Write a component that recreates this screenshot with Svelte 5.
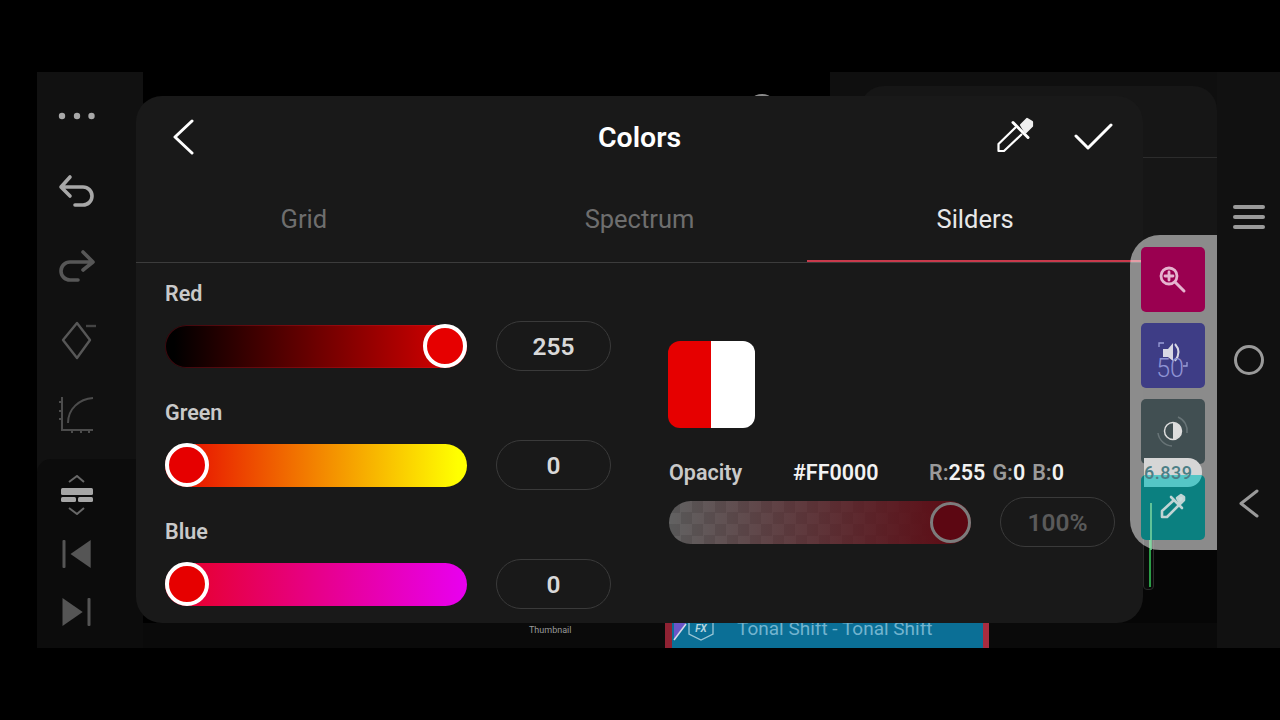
<script lang="ts">
  const tabs = ['Grid', 'Spectrum', 'Silders'];
  let activeTab = 'Silders';

  const channels = [
    { name: 'Red', value: 255, kind: 'red', end: true },
    { name: 'Green', value: 0, kind: 'green', end: false },
    { name: 'Blue', value: 0, kind: 'blue', end: false }
  ];
</script>

<div class="screen">
  <aside class="rail">
    <div class="rail-top">
      <div class="rail-btn">
        <svg viewBox="0 0 40 40" fill="#a8a8a8"><circle cx="5" cy="20" r="3.2" /><circle cx="20" cy="20" r="3.2" /><circle cx="34.500" cy="20" r="3.2" /></svg>
      </div>
      <div class="rail-btn">
        <svg viewBox="0 0 40 40" fill="none" stroke="#a8a8a8" stroke-width="3.600" stroke-linecap="round" stroke-linejoin="round"><path d="M13 6 L4 16 L13 25 M5 16 H26 A9 9 0 0 1 26 34 H18" /></svg>
      </div>
      <div class="rail-btn">
        <svg viewBox="0 0 40 40" fill="none" stroke="#575757" stroke-width="3.600" stroke-linecap="round" stroke-linejoin="round"><path d="M26 7 L36 17 L26 25 M35 17 H13 A9 9 0 0 0 13 35 H21" /></svg>
      </div>
      <div class="rail-btn">
        <svg viewBox="0 0 40 40" fill="none" stroke="#575757" stroke-width="2.4" stroke-linejoin="round"><path d="M20 3 L33 20 L20 38 L6 20 Z" /><path d="M29 6 H39" stroke="#444" /></svg>
      </div>
      <div class="rail-btn">
        <svg viewBox="0 0 40 40" fill="none" stroke="#4c4c4c" stroke-width="2"><path d="M5 3 V36 H36 M2 8 H5 M2 17 H5 M2 25 H5 M15 36 V39 M24 36 V39 M32 36 V39" /><path d="M11 29 C11 15 22 5 36 4" /></svg>
      </div>
    </div>
    <div class="rail-bottom">
      <div class="rail-btn small">
        <svg viewBox="0 0 40 40" fill="#a6a6a6"><path d="M12 7 L20 1 L27 7 M12 33 L20 39 L27 33" fill="none" stroke="#686868" stroke-width="2" /><rect x="4" y="13" width="32" height="7" rx="1.500" /><rect x="4" y="22" width="15" height="5" rx="1.500" /><rect x="21" y="22" width="15" height="5" rx="1.500" /></svg>
      </div>
      <div class="rail-btn small">
        <svg viewBox="0 0 40 40" fill="#555"><rect x="5.500" y="6" width="3" height="28" rx="1" /><path d="M13.500 20 L33.700 6 V34 Z" /></svg>
      </div>
      <div class="rail-btn small">
        <svg viewBox="0 0 40 40" fill="#555"><rect x="30.500" y="6" width="3" height="28" rx="1" /><path d="M25.700 20 L5.500 6 V34 Z" /></svg>
      </div>
    </div>
  </aside>

  <main class="stage">
    <div class="stage-top">
      <div class="preview"><div class="peek"></div></div>
      <div class="panel">
        <div class="panel-card"><div class="panel-head"></div></div>
        <div class="panel-rest"></div>
      </div>
    </div>
    <div class="strip">
      <span class="thumb-label">Thumbnail</span>
      <div class="clip">
        <svg class="clip-badge" viewBox="0 0 42 20" fill="none">
          <path d="M2 0 H14 L2 17 Z" fill="#6a55c8" />
          <path d="M14 1 L2 17" stroke="#d8d8e8" stroke-width="1.600" />
          <path d="M17 -4 V11 L29 17 L41 11 V-4" stroke="#9cc6d6" stroke-width="1.300" />
          <text x="29" y="9" text-anchor="middle" class="fx">FX</text>
        </svg>
        <span class="clip-title">Tonal Shift - Tonal Shift</span>
      </div>
    </div>
  </main>

  <nav class="sysbar">
    <div class="hamburger"><span></span><span></span><span></span></div>
    <div class="home"></div>
    <svg class="sys-back" viewBox="0 0 24 32" fill="none" stroke="#9a9a9a" stroke-width="3" stroke-linecap="round" stroke-linejoin="round"><path d="M20 3 L4 15.500 L20 28" /></svg>
  </nav>

  <div class="track-peek"><i></i></div>

  <section class="modal">
    <header class="modal-head">
      <svg class="icon back" viewBox="0 0 24 36" fill="none" stroke="#fff" stroke-width="3" stroke-linecap="round" stroke-linejoin="round"><path d="M20 2 L3 18 L20 34" /></svg>
      <h1>Colors</h1>
      <div class="head-actions">
        <svg class="icon dropper" viewBox="0 0 40 40" fill="none" stroke="#fff" stroke-width="2.200" stroke-linejoin="round"><path d="M20 10 L2.500 27 V34 H8 L26 17" /><path d="M17 5.500 L32 20.500" stroke-width="3" stroke-linecap="round" /><path d="M25 8 L31 2 L36 5 V9 L29.500 15.500 Z" fill="#eee" stroke="#eee" /></svg>
        <svg class="icon check" viewBox="0 0 40 30" fill="none" stroke="#fff" stroke-width="3" stroke-linecap="round" stroke-linejoin="round"><path d="M3 14 L15 26 L38 3" /></svg>
      </div>
    </header>

    <div class="tabs">
      {#each tabs as tab}
        <div class="tab" class:active={tab === activeTab}>{tab}</div>
      {/each}
    </div>

    <div class="body">
      <div class="channels">
        {#each channels as ch}
          <div class="channel">
            <div class="label">{ch.name}</div>
            <div class="slider-row">
              <div class="track {ch.kind}" class:end={ch.end}><div class="knob"></div></div>
              <div class="pill">{ch.value}</div>
            </div>
          </div>
        {/each}
      </div>

      <div class="summary">
        <div class="swatch"><div class="swatch-new"></div><div class="swatch-old"></div></div>
        <div class="readout">
          <span class="label op-label">Opacity</span>
          <span class="hex">#FF0000</span>
          <span class="rgb"><em>R:</em>255</span>
          <span class="rgb g"><em>G:</em>0</span>
          <span class="rgb b"><em>B:</em>0</span>
        </div>
        <div class="slider-row">
          <div class="track opacity end"><div class="knob"></div></div>
          <div class="pill dim">100%</div>
        </div>
      </div>
    </div>
  </section>

  <div class="tools">
    <button class="tool zoom" aria-label="zoom">
      <svg viewBox="0 0 64 64" fill="none" stroke="#e6b4cf" stroke-width="2.800" stroke-linecap="round"><circle cx="28" cy="29" r="8" /><path d="M34 35 L43 44" stroke-width="3" /><path d="M24 29 H32 M28 25 V33" /></svg>
    </button>
    <button class="tool volume" aria-label="volume">
      <svg viewBox="0 0 64 64" fill="none" stroke="#9a9ed8" stroke-width="1.300">
        <path d="M22 26 H27 L32 20 V38 L27 34 H22 Z" fill="#d8d8e4" stroke="none" />
        <path d="M34 21 Q41 29 34 38" stroke="#d8d8e4" stroke-width="2" />
        <path d="M18 24 V20 H23 M46 39 V43 H42" />
        <text x="29" y="54" text-anchor="middle" class="vol">50</text>
      </svg>
    </button>
    <button class="tool contrast" aria-label="contrast">
      <svg viewBox="0 0 64 64" fill="none" stroke="#ddd" stroke-width="1.500">
        <circle cx="32" cy="32" r="8.500" />
        <path d="M32 23.500 A8.500 8.500 0 0 1 32 40.500 Z" fill="#ddd" stroke="none" />
        <path d="M37 18 A15 15 0 0 1 46 34 M17 34 A15 15 0 0 0 31 47" stroke="#687477" />
      </svg>
    </button>
    <button class="tool pick" aria-label="pick">
      <svg viewBox="0 0 64 64" fill="none" stroke="#c0d4d4" stroke-width="2.600" stroke-linejoin="round"><path d="M33 25 L21 36 V42 H26 L38 30" /><path d="M30 22 L41 33" stroke-linecap="round" /><path d="M36 23 L40 20 L43 22 L43 25 L39 29 Z" fill="#c8dede" /></svg>
    </button>
    <i class="pick-line"></i>
    <div class="chip">6.839</div>
  </div>
</div>

<style>
  :global(body) {
    margin: 0;
    background: #000;
  }

  .screen {
    position: relative;
    box-sizing: border-box;
    width: 1243px;
    height: 576px;
    margin: 72px 0 0 37px;
    display: grid;
    grid-template-columns: 106px 1fr 63px;
    font-family: Roboto, "Liberation Sans", sans-serif;
    overflow: hidden;
  }

  .rail {
    background: #111;
    display: flex;
    flex-direction: column;
  }
  .rail-top {
    padding: 7px 0;
    height: 373px;
    box-sizing: content-box;
  }
  .rail-bottom {
    flex: 1;
    background: #0c0c0c;
    border-radius: 14px 0 0 0;
    padding-top: 7px;
  }
  .rail-btn {
    height: 74.5px;
    width: 80px;
    display: flex;
    align-items: center;
    justify-content: center;
  }
  .rail-btn.small {
    height: 58.500px;
  }
  .rail-btn svg {
    width: 40px;
    height: 40px;
  }

  .stage {
    display: flex;
    flex-direction: column;
    min-width: 0;
  }
  .stage-top {
    flex: 1;
    display: flex;
  }
  .preview {
    width: 687px;
    background: #000;
  }
  .peek {
    width: 32px;
    height: 32px;
    margin: 22px 0 0 603px;
    box-sizing: border-box;
    border: 2px solid #8a8a8a;
    border-radius: 50%;
  }
  .panel {
    flex: 1;
    display: flex;
    flex-direction: column;
    background: #0f0f0f;
    padding-top: 14px;
  }
  .panel-card {
    height: 464px;
    margin-left: 30px;
    background: #161616;
    border-radius: 24px 24px 0 0;
  }
  .panel-head {
    height: 71px;
    border-bottom: 1px solid #2c2c2c;
  }
  .panel-rest {
    flex: 1;
    background: #060606;
  }

  .strip {
    height: 25px;
    background: #0a0a0a;
    display: flex;
    align-items: stretch;
  }
  .thumb-label {
    margin-left: 386px;
    width: 136px;
    font-size: 9px;
    line-height: 15px;
    color: #9a9a9a;
  }
  .clip {
    width: 311px;
    display: flex;
    background: #0b6f96;
    border-left: 7px solid #8f2233;
    border-right: 6px solid #a92c40;
    margin-right: auto;
  }
  .clip-badge {
    width: 42px;
    height: 20px;
    flex: none;
    overflow: visible;
  }
  .fx {
    font: italic 700 10px Roboto, sans-serif;
    fill: #b5d5e0;
    stroke: none;
  }
  .clip-title {
    margin: -6px 0 0 23px;
    font-size: 19px;
    line-height: 24px;
    color: #72b4cf;
    white-space: nowrap;
  }

  .sysbar {
    background: #111;
    display: flex;
    flex-direction: column;
    align-items: center;
  }
  .hamburger {
    margin-top: 133px;
    display: flex;
    flex-direction: column;
    gap: 6px;
  }
  .hamburger span {
    display: block;
    width: 32px;
    height: 4px;
    border-radius: 2px;
    background: #9a9a9a;
  }
  .home {
    margin-top: 116px;
    width: 30px;
    height: 30px;
    box-sizing: border-box;
    border: 3px solid #9a9a9a;
    border-radius: 50%;
  }
  .sys-back {
    margin-top: 113px;
    width: 24px;
    height: 32px;
  }

  .track-peek {
    position: absolute;
    left: 1106px;
    top: 420px;
    width: 11px;
    height: 98px;
    box-sizing: border-box;
    border: 1px solid #2a2a2a;
    border-radius: 0 0 4px 4px;
    background: #0a0a0a;
  }
  .track-peek i {
    display: block;
    width: 2px;
    height: 90px;
    margin: 4px 0 0 5px;
    background: #2b9c46;
  }

  .modal {
    position: absolute;
    left: 99px;
    top: 24px;
    width: 1007px;
    height: 527px;
    background: #191919;
    border-radius: 26px;
    color: #fff;
    display: flex;
    flex-direction: column;
  }
  .modal-head {
    height: 82px;
    flex: none;
    display: grid;
    grid-template-columns: 1fr auto 1fr;
    align-items: center;
  }
  .modal-head h1 {
    margin: 0;
    font-size: 28.500px;
    font-weight: 600;
  }
  .icon {
    display: block;
  }
  .back {
    width: 24px;
    height: 36px;
    margin-left: 36px;
    margin-top: -1px;
  }
  .head-actions {
    display: flex;
    align-items: center;
    justify-content: flex-end;
    padding-right: 30px;
    gap: 37px;
  }
  .dropper {
    width: 40px;
    height: 40px;
  }
  .check {
    width: 40px;
    height: 30px;
  }

  .tabs {
    flex: none;
    height: 84px;
    display: grid;
    grid-template-columns: repeat(3, 1fr);
    border-bottom: 1px solid #3c3c3c;
    font-size: 25.500px;
    color: #6e6e6e;
  }
  .tab {
    display: flex;
    align-items: center;
    justify-content: center;
    box-sizing: border-box;
    padding-bottom: 2px;
  }
  .tab.active {
    color: #e8e8e8;
    padding-bottom: 0;
    border-bottom: 2px solid #c93a4c;
  }

  .body {
    flex: 1;
    display: grid;
    grid-template-columns: 446px 446px;
    column-gap: 58px;
    padding: 19px 0 0 29px;
  }
  .channel {
    margin-bottom: 30px;
  }
  .label {
    font-size: 21.500px;
    line-height: 24px;
    font-weight: 600;
    color: #c9c9c9;
  }
  .channel .label {
    margin-bottom: 15px;
  }
  .slider-row {
    display: flex;
    align-items: center;
    gap: 29px;
  }
  .track {
    width: 302px;
    height: 43px;
    flex: none;
    box-sizing: border-box;
    border-radius: 22px;
    display: flex;
    align-items: center;
    justify-content: flex-start;
  }
  .track.end {
    justify-content: flex-end;
  }
  .red {
    background: linear-gradient(to right, #000 3%, #e00000);
    box-shadow: inset 0 0 0 1px rgba(200, 30, 45, 0.3);
  }
  .green {
    background: linear-gradient(to right, #e60000, #ffff00 97%);
  }
  .blue {
    background: linear-gradient(to right, #e60020, #e800f0);
  }
  .knob {
    width: 44px;
    height: 44px;
    flex: none;
    box-sizing: border-box;
    border: 4px solid #fff;
    border-radius: 50%;
    background: #e60000;
  }
  .pill {
    width: 115px;
    height: 50px;
    flex: none;
    box-sizing: border-box;
    border: 1.500px solid #3a3a3a;
    border-radius: 25px;
    display: flex;
    align-items: center;
    justify-content: center;
    font-size: 24.500px;
    font-weight: 600;
    color: #d8d8d8;
  }
  .pill.dim {
    color: #5a5a5a;
  }

  .summary {
    padding-top: 59px;
  }
  .swatch {
    width: 87px;
    height: 87px;
    margin-left: -1px;
    display: flex;
    border-radius: 12px;
    overflow: hidden;
  }
  .swatch-new {
    width: 43px;
    background: #e60000;
  }
  .swatch-old {
    flex: 1;
    background: #fff;
  }
  .readout {
    margin-top: 33px;
    margin-bottom: 12px;
    display: flex;
    align-items: center;
    font-size: 21.500px;
    font-weight: 600;
    line-height: 24px;
  }
  .op-label {
    width: 124px;
  }
  .hex {
    width: 136px;
    color: #f2f2f2;
  }
  .rgb {
    color: #f2f2f2;
  }
  .rgb em {
    font-style: normal;
    color: #9a9a9a;
  }
  .rgb.g {
    margin-left: 7px;
  }
  .rgb.b {
    margin-left: 7px;
  }
  .opacity {
    background:
      linear-gradient(to right, rgba(94, 20, 28, 0), #5c1018 90%),
      repeating-conic-gradient(#626262 0 25%, #585858 0 50%) 0 0 / 23px 23px;
  }
  .opacity .knob {
    width: 41px;
    height: 41px;
    border: 3px solid #7c7c7c;
    background: #5c0712;
  }

  .tools {
    position: absolute;
    left: 1093px;
    top: 163px;
    width: 87px;
    height: 315px;
    box-sizing: border-box;
    padding: 12px 0 0 11px;
    background: rgba(255, 255, 255, 0.5);
    border-radius: 30px 0 0 30px;
    display: flex;
    flex-direction: column;
    gap: 11.500px;
  }
  .tool {
    width: 64px;
    height: 64.500px;
    flex: none;
    padding: 0;
    border: 0;
    border-radius: 5px;
  }
  .tool svg {
    display: block;
    width: 64px;
    height: 64px;
  }
  .zoom {
    background: #9a0050;
  }
  .volume {
    background: #3e3d86;
  }
  .contrast {
    background: #414f52;
  }
  .pick {
    background: #0b8080;
  }
  .pick-line {
    position: absolute;
    left: 20px;
    top: 268px;
    width: 2px;
    height: 47px;
    background: #7fd8a0;
    opacity: 0.75;
  }
  .vol {
    font: 300 25px Roboto, sans-serif;
    fill: #8f93d4;
    stroke: none;
  }
  .chip {
    position: absolute;
    left: 14px;
    top: 223px;
    width: 58px;
    height: 29px;
    box-sizing: border-box;
    border-radius: 0 14px 14px 0;
    background: linear-gradient(to bottom, #d6d6d6 17px, #55c6c6 17px);
    color: #4c7f86;
    font-size: 18px;
    font-weight: 500;
    line-height: 29px;
    letter-spacing: 0.5px;
  }
</style>
